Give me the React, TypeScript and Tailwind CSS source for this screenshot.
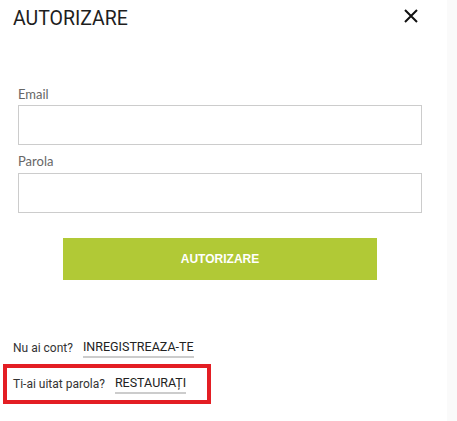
const App = () => {
  return (
    <div className="flex h-[421px] w-[457px] bg-white font-['Roboto',sans-serif]">
      <div className="relative flex-1">
        <div className="flex items-start justify-between pl-[13px] pr-[29px] pt-[8px]">
          <h1 className="text-[19.5px] leading-[22px] text-[#1e1e1e]">AUTORIZARE</h1>
          <button className="mt-[1px] text-[#111]" aria-label="close">
            <svg width="14" height="14" viewBox="0 0 14 14">
              <path d="M1 1 L13 13 M13 1 L1 13" stroke="#111" strokeWidth="2" />
            </svg>
          </button>
        </div>

        <form className="mt-[56px] flex flex-col px-[18px] pr-[25px]">
          <label className="text-[13px] leading-[16px] text-[#666] font-['Lato',sans-serif]">Email</label>
          <input className="mt-[3px] h-[40px] w-full border border-[#ccc] outline-none" />
          <label className="mt-[8px] text-[13px] leading-[16px] text-[#666] font-['Lato',sans-serif]">Parola</label>
          <input type="password" className="mt-[4px] h-[40px] w-full border border-[#ccc] outline-none" />
          <div className="flex justify-center">
            <button
              type="button"
              className="mt-[25px] h-[42px] w-[314px] bg-[#b1c936] font-['Liberation_Sans',sans-serif] text-[12px] font-bold text-white"
            >
              AUTORIZARE
            </button>
          </div>
        </form>

        <div className="mt-[58px] flex flex-col text-[12px] text-[#333]">
          <div className="flex h-[20px] items-center pl-[13px]">
            <span>Nu ai cont?</span>
            <a href="#" className="ml-[10px] border-b-2 border-[#ccc] text-[12.5px] text-[#222]">
              INREGISTREAZA-TE
            </a>
          </div>
          <div className="ml-[3px] mt-[6px] flex h-[40px] w-[208px] items-center border-4 border-[#e31e24] pl-[6px]">
            <span>Ti-ai uitat parola?</span>
            <a href="#" className="ml-[10px] border-b-2 border-[#ccc] text-[12.5px] text-[#222]">
              RESTAURAȚI
            </a>
          </div>
        </div>
      </div>
      <div className="w-[10px] bg-[#fafafa]" />
    </div>
  );
};

export default App;
